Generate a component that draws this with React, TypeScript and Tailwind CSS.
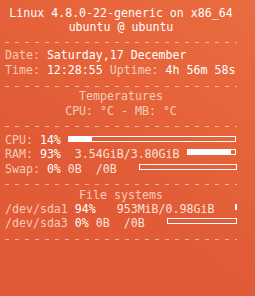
import React from "react";

const label = "text-[#f8cbb8]";
const value = "text-white";

function Hr({ className = "" }: { className?: string }) {
  return (
    <div
      className={`h-px w-[232px] bg-[linear-gradient(to_right,#f3b49c_40%,transparent_40%)] bg-[length:10px_1px] ${className}`}
    />
  );
}

function Bar({ width, pct, gap = "ml-[7px]" }: { width: number; pct: number; gap?: string }) {
  return (
    <div
      className={`${gap} mt-[2px] h-[6px] border border-white shrink-0`}
      style={{ width }}
    >
      <div className="h-full bg-white" style={{ width: `${pct}%` }} />
    </div>
  );
}

export default function App() {
  return (
    <div className="w-[255px] h-[296px] overflow-hidden bg-[linear-gradient(215deg,#ea6c3f_0%,#e6633a_35%,#e05b36_60%,#df5a35_100%)] pl-[5px] pt-[6px] font-['DejaVu_Sans_Mono',monospace] text-[11.6px] whitespace-pre">
      <div className="w-[232px] text-center text-white">
        <div className="h-[14px] leading-[14px]">Linux 4.8.0-22-generic on x86_64</div>
        <div className="h-[14px] leading-[14px]">ubuntu @ ubuntu</div>
      </div>

      <Hr className="mt-[8px]" />

      <div className="mt-[5px] h-[15px] leading-[15px]">
        <span className={label}>Date: </span>
        <span className={value}>Saturday,17 December</span>
      </div>
      <div className="h-[14px] leading-[14px]">
        <span className={label}>Time: </span>
        <span className={value}>12:28:55 </span>
        <span className={label}>Uptime: </span>
        <span className={value}>4h 56m 58s</span>
      </div>

      <Hr className="mt-[9px]" />

      <div className={`w-[232px] text-center ${label} mt-[2px]`}>
        <div className="h-[15px] leading-[15px]">Temperatures</div>
        <div className="h-[14px] leading-[14px]">CPU: °C - MB: °C</div>
      </div>

      <Hr className="mt-[8px]" />

      <div className="mt-[7px] flex h-[13px] leading-[13px]">
        <span className={label}>CPU: </span>
        <span className={value}>14%</span>
        <Bar width={168} pct={14} />
      </div>
      <div className="flex h-[15px] leading-[15px]">
        <span className={label}>RAM: </span>
        <span className={value}>93%  </span>
        <span className="text-[#fbe2d7]">3.54GiB/3.80GiB</span>
        <Bar width={49} pct={93} />
      </div>
      <div className="flex h-[14px] leading-[14px]">
        <span className={label}>Swap: </span>
        <span className={value}>0% </span>
        <span className="text-[#fbe2d7]">0B  /0B</span>
        <Bar width={98} pct={0} gap="ml-[22px]" />
      </div>

      <Hr className="mt-[8px]" />

      <div className={`w-[232px] text-center ${label} mt-[3px] h-[14px] leading-[14px]`}>
        File systems
      </div>
      <div className="flex h-[14px] leading-[14px]">
        <span className={label}>/dev/sda1 </span>
        <span className={value}>94%   </span>
        <span className="text-[#fbe2d7]">953MiB/0.98GiB</span>
        <Bar width={2} pct={0} gap="ml-[21px]" />
      </div>
      <div className="flex h-[14px] leading-[14px]">
        <span className={label}>/dev/sda3 </span>
        <span className={value}>0% </span>
        <span className="text-[#fbe2d7]">0B  /0B</span>
        <Bar width={70} pct={0} gap="ml-[22px]" />
      </div>

      <Hr className="mt-[9px]" />
    </div>
  );
}
